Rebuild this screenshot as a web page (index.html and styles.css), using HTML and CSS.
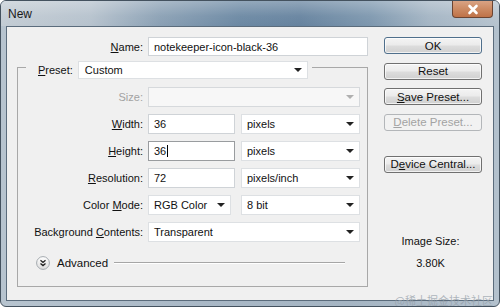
FILE: index.html
```html
<!DOCTYPE html>
<html>
<head>
<meta charset="utf-8">
<title>New</title>
<link rel="stylesheet" href="styles.css">
</head>
<body>
<div class="window">
  <div class="titlebar">
    <span class="title">New</span>
    <div class="close">
      <svg width="14" height="11" viewBox="0 0 14 11"><path d="M3.5 2 L10.5 9 M10.5 2 L3.5 9" stroke="#fff" stroke-width="2.6" stroke-linecap="round"/></svg>
    </div>
  </div>
  <div class="client">
    <div class="form">
      <div class="row name-row">
        <span class="lbl"><u>N</u>ame:</span>
        <div class="field">notekeeper-icon-black-36</div>
      </div>
      <div class="group">
        <div class="legend">
          <span class="lbl-inline"><u>P</u>reset:</span>
          <div class="field select preset">Custom</div>
        </div>
        <div class="rows">
          <div class="row">
            <span class="lbl disabled">Size:</span>
            <div class="field select disabled"></div>
          </div>
          <div class="row">
            <span class="lbl"><u>W</u>idth:</span>
            <div class="controls">
              <div class="field num">36</div>
              <div class="field select unit">pixels</div>
            </div>
          </div>
          <div class="row">
            <span class="lbl"><u>H</u>eight:</span>
            <div class="controls">
              <div class="field num focus">36<span class="caret"></span></div>
              <div class="field select unit">pixels</div>
            </div>
          </div>
          <div class="row">
            <span class="lbl"><u>R</u>esolution:</span>
            <div class="controls">
              <div class="field num">72</div>
              <div class="field select unit">pixels/inch</div>
            </div>
          </div>
          <div class="row">
            <span class="lbl">Color <u>M</u>ode:</span>
            <div class="controls wide-gap">
              <div class="field select mode">RGB Color</div>
              <div class="field select unit">8 bit</div>
            </div>
          </div>
          <div class="row">
            <span class="lbl">Background <u>C</u>ontents:</span>
            <div class="field select">Transparent</div>
          </div>
        </div>
        <div class="advanced">
          <svg class="adv-icon" width="14" height="14" viewBox="0 0 14 14">
            <defs><linearGradient id="g" x1="0" y1="0" x2="0" y2="1"><stop offset="0" stop-color="#ffffff"/><stop offset="1" stop-color="#dcdcdc"/></linearGradient></defs>
            <circle cx="7" cy="7" r="6.4" fill="url(#g)" stroke="#a3a9ae" stroke-width="1"/>
            <path d="M4.5 4.2 L7 6.4 L9.5 4.2 M4.5 7.4 L7 9.6 L9.5 7.4" fill="none" stroke="#222" stroke-width="1.3"/>
          </svg>
          <span class="adv-text">Advanced</span>
          <span class="adv-line"></span>
        </div>
      </div>
    </div>
    <div class="side">
      <div class="btn default">OK</div>
      <div class="btn">Reset</div>
      <div class="btn"><u>S</u>ave Preset...</div>
      <div class="btn disabled-btn"><u>D</u>elete Preset...</div>
      <div class="btn device">D<u>e</u>vice Central...</div>
      <div class="image-size">
        <div>Image Size:</div>
        <div class="size-val">3.80K</div>
      </div>
    </div>
  </div>
  <div class="watermark">@稀土掘金技术社区</div>
</div>
</body>
</html>
```

FILE: styles.css
```css
* { box-sizing: border-box; }
html, body { margin: 0; padding: 0; }
body {
  width: 500px;
  height: 307px;
  overflow: hidden;
  background: #ffffff;
  font-family: "Liberation Sans", Arial, sans-serif;
  font-size: 11px;
  color: #111;
}
u { text-decoration: underline; text-underline-offset: 1px; }

.window {
  position: relative;
  width: 500px;
  height: 307px;
  border: 1px solid #44525f;
  border-radius: 6px;
  background: linear-gradient(90deg, #b7c4cf 0%, #a9b8c6 40%, #a5b5c3 70%, #b3c1cd 100%);
  padding: 0 5px 5px;
  display: flex;
  flex-direction: column;
  overflow: hidden;
}

.titlebar {
  height: 25px;
  margin: 0 -5px;
  padding-left: 7px;
  display: flex;
  align-items: center;
  background:
    linear-gradient(180deg, rgba(255,255,255,0.28) 0%, rgba(255,255,255,0.05) 60%, rgba(255,255,255,0) 100%),
    linear-gradient(90deg, #c3ccd4 0%, #b6c2cd 18%, #8aa0b4 32%, #6b88a3 48%, #66839f 60%, #7d97ae 74%, #a4b5c4 86%, #b6c3ce 100%);
}
.title {
  font-size: 12px;
  color: #1a1a1a;
}
.close {
  margin-left: auto;
  margin-right: 6px;
  align-self: flex-start;
  width: 41px;
  height: 17px;
  border: 1px solid #6b4432;
  border-top: none;
  border-radius: 0 0 4px 4px;
  background: linear-gradient(180deg, #d9a384 0%, #cc8a63 50%, #bf7248 100%);
  display: flex;
  align-items: center;
  justify-content: center;
}

.client {
  flex: 1;
  border: 1px solid #5b6c7c;
  background: #f0f0f0;
  display: flex;
  padding-top: 10px;
}

.form {
  width: 361px;
  padding-left: 10px;
}

.row {
  display: grid;
  grid-template-columns: 125px 1fr;
  column-gap: 5px;
  align-items: center;
  height: 20px;
}
.name-row {
  height: 19px;
  padding-left: 1px;
}
.lbl {
  text-align: right;
  white-space: nowrap;
  color: #111;
}
.lbl.disabled { color: #a2a2a2; }

.field {
  height: 100%;
  background: #ffffff;
  border: 1px solid #cfd3d7;
  padding-left: 5px;
  display: flex;
  align-items: center;
  white-space: nowrap;
  color: #111;
}
.field.select {
  position: relative;
  padding-right: 5px;
  border-color: #dde0e3;
}
.field.select::after {
  content: "";
  margin-left: auto;
  width: 0;
  height: 0;
  border-left: 4px solid transparent;
  border-right: 4px solid transparent;
  border-top: 4px solid #222;
}
.field.select.disabled {
  background: #f7f7f7;
  border-color: #d6d9dc;
}
.field.select.disabled::after { border-top-color: #b0b0b0; }

.group {
  margin-top: 11px;
  border: 1px solid #a8a8a8;
  padding-right: 7px;
  padding-bottom: 16px;
}
.legend {
  display: flex;
  align-items: center;
  gap: 5px;
  width: max-content;
  height: 18px;
  margin-top: -7px;
  margin-left: 8px;
  padding: 0 4px 0 12px;
  background: #f0f0f0;
}
.preset {
  width: 230px;
  padding-left: 6px;
  padding-right: 6px;
}

.rows {
  margin-top: 8px;
  display: flex;
  flex-direction: column;
  gap: 7px;
}
.controls {
  display: flex;
  gap: 6px;
  height: 100%;
}
.controls.wide-gap { gap: 10px; }
.num { width: 87px; }
.num.focus { border-color: #999c9f; }
.caret {
  display: inline-block;
  width: 1px;
  height: 12px;
  margin-left: 1px;
  background: #000;
}
.unit { flex: 1; }
.mode { width: 83px; }

.advanced {
  display: flex;
  align-items: center;
  margin-top: 14px;
  height: 14px;
  padding-left: 18px;
  padding-right: 15px;
}
.adv-icon { flex: none; }
.adv-text { margin-left: 7px; font-size: 11.5px; color: #111; }
.adv-line {
  flex: 1;
  margin-left: 6px;
  border-top: 1px solid #a6a6a6;
  border-bottom: 1px solid #ffffff;
}

.side {
  width: 98px;
  margin-left: 16px;
  display: flex;
  flex-direction: column;
}
.btn {
  height: 17px;
  border: 1px solid #707070;
  border-radius: 3px;
  background: linear-gradient(180deg, #f4f4f4 0%, #ebebeb 48%, #dddddd 52%, #d0d0d0 100%);
  box-shadow: inset 0 0 0 1px rgba(255,255,255,0.7);
  display: flex;
  align-items: center;
  justify-content: center;
  color: #111;
  font-size: 11.5px;
  white-space: nowrap;
}
.btn + .btn { margin-top: 8.5px; }
.btn.default { border-color: #4f6f8c; }
.btn.disabled-btn {
  border-color: #b3b6b9;
  background: #f2f2f2;
  color: #a3a3a3;
  box-shadow: none;
}
.btn.device { margin-top: 25px; }

.image-size {
  margin-top: 61px;
  padding-right: 5px;
  text-align: center;
  line-height: 14px;
  color: #111;
}
.size-val { margin-top: 8px; }

.watermark {
  position: absolute;
  right: 6px;
  bottom: -2px;
  font-family: "Noto Sans CJK SC", sans-serif;
  font-size: 11px;
  color: rgba(150, 160, 170, 0.75);
  white-space: nowrap;
}
```
